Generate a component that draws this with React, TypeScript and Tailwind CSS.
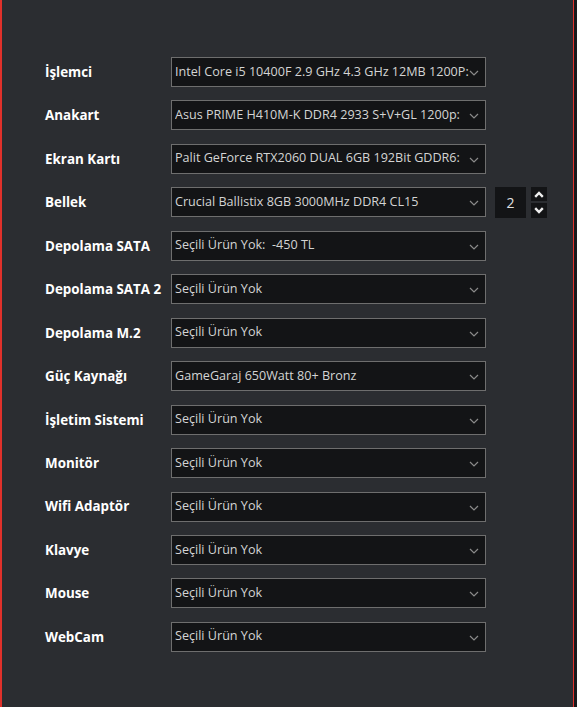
import React from "react";

const rows: { label: string; value: string }[] = [
  { label: "İşlemci", value: "Intel Core i5 10400F 2.9 GHz 4.3 GHz 12MB 1200P:" },
  { label: "Anakart", value: "Asus PRIME H410M-K DDR4 2933 S+V+GL 1200p:" },
  { label: "Ekran Kartı", value: "Palit GeForce RTX2060 DUAL 6GB 192Bit GDDR6:" },
  { label: "Bellek", value: "Crucial Ballistix 8GB 3000MHz DDR4 CL15" },
  { label: "Depolama SATA", value: "Seçili Ürün Yok:  -450 TL" },
  { label: "Depolama SATA 2", value: "Seçili Ürün Yok" },
  { label: "Depolama M.2", value: "Seçili Ürün Yok" },
  { label: "Güç Kaynağı", value: "GameGaraj 650Watt 80+ Bronz" },
  { label: "İşletim Sistemi", value: "Seçili Ürün Yok" },
  { label: "Monitör", value: "Seçili Ürün Yok" },
  { label: "Wifi Adaptör", value: "Seçili Ürün Yok" },
  { label: "Klavye", value: "Seçili Ürün Yok" },
  { label: "Mouse", value: "Seçili Ürün Yok" },
  { label: "WebCam", value: "Seçili Ürün Yok" },
];

function Chevron() {
  return (
    <svg width="10" height="6" viewBox="0 0 10 6" className="absolute right-[6px] top-[12px]">
      <path d="M1 1 L5 5 L9 1" fill="none" stroke="#8a8a8a" strokeWidth="1.2" />
    </svg>
  );
}

function Select({ value }: { value: string }) {
  return (
    <div className="relative w-[315px] h-[30px] bg-[#131416] border border-[#6e6e6e] shrink-0">
      <div className="absolute left-[3px] right-[14px] top-0 bottom-0 overflow-hidden whitespace-pre flex items-center text-[12.6px] text-[#d4d4d4]">
        {value}
      </div>
      <Chevron />
    </div>
  );
}

function Stepper() {
  return (
    <div className="flex items-center ml-[9px] gap-[5px]">
      <div className="w-[31px] h-[31px] bg-[#131416] flex items-center justify-center text-[14px] text-[#e0e0e0]">2</div>
      <div className="flex flex-col gap-[2px]">
        <div className="w-[16px] h-[14.5px] bg-[#131416] flex items-center justify-center">
          <svg width="10" height="7" viewBox="0 0 10 7">
            <path d="M1.2 5.8 L5 2 L8.8 5.8" fill="none" stroke="#f0f0f0" strokeWidth="2.4" />
          </svg>
        </div>
        <div className="w-[16px] h-[14.5px] bg-[#131416] flex items-center justify-center">
          <svg width="10" height="7" viewBox="0 0 10 7">
            <path d="M1.2 1.2 L5 5 L8.8 1.2" fill="none" stroke="#f0f0f0" strokeWidth="2.4" />
          </svg>
        </div>
      </div>
    </div>
  );
}

export default function App() {
  return (
    <div className="flex w-[577px] h-[707px] bg-[#17181b] overflow-hidden" style={{ fontFamily: '"Open Sans", "Liberation Sans", sans-serif' }}>
      <div className="w-[574px] h-full bg-[#2b2d31] border-l-2 border-r-[1.5px] border-l-[#e0312b] border-r-[#e0312b]">
        <div className="pt-[57px] pl-[43px] flex flex-col gap-[13.46px]">
          {rows.map((r) => (
            <div key={r.label} className="flex items-center h-[30px]">
              <div className="w-[126px] shrink-0 text-[13.4px] font-bold text-white">{r.label}</div>
              <Select value={r.value} />
              {r.label === "Bellek" && <Stepper />}
            </div>
          ))}
        </div>
      </div>
    </div>
  );
}
